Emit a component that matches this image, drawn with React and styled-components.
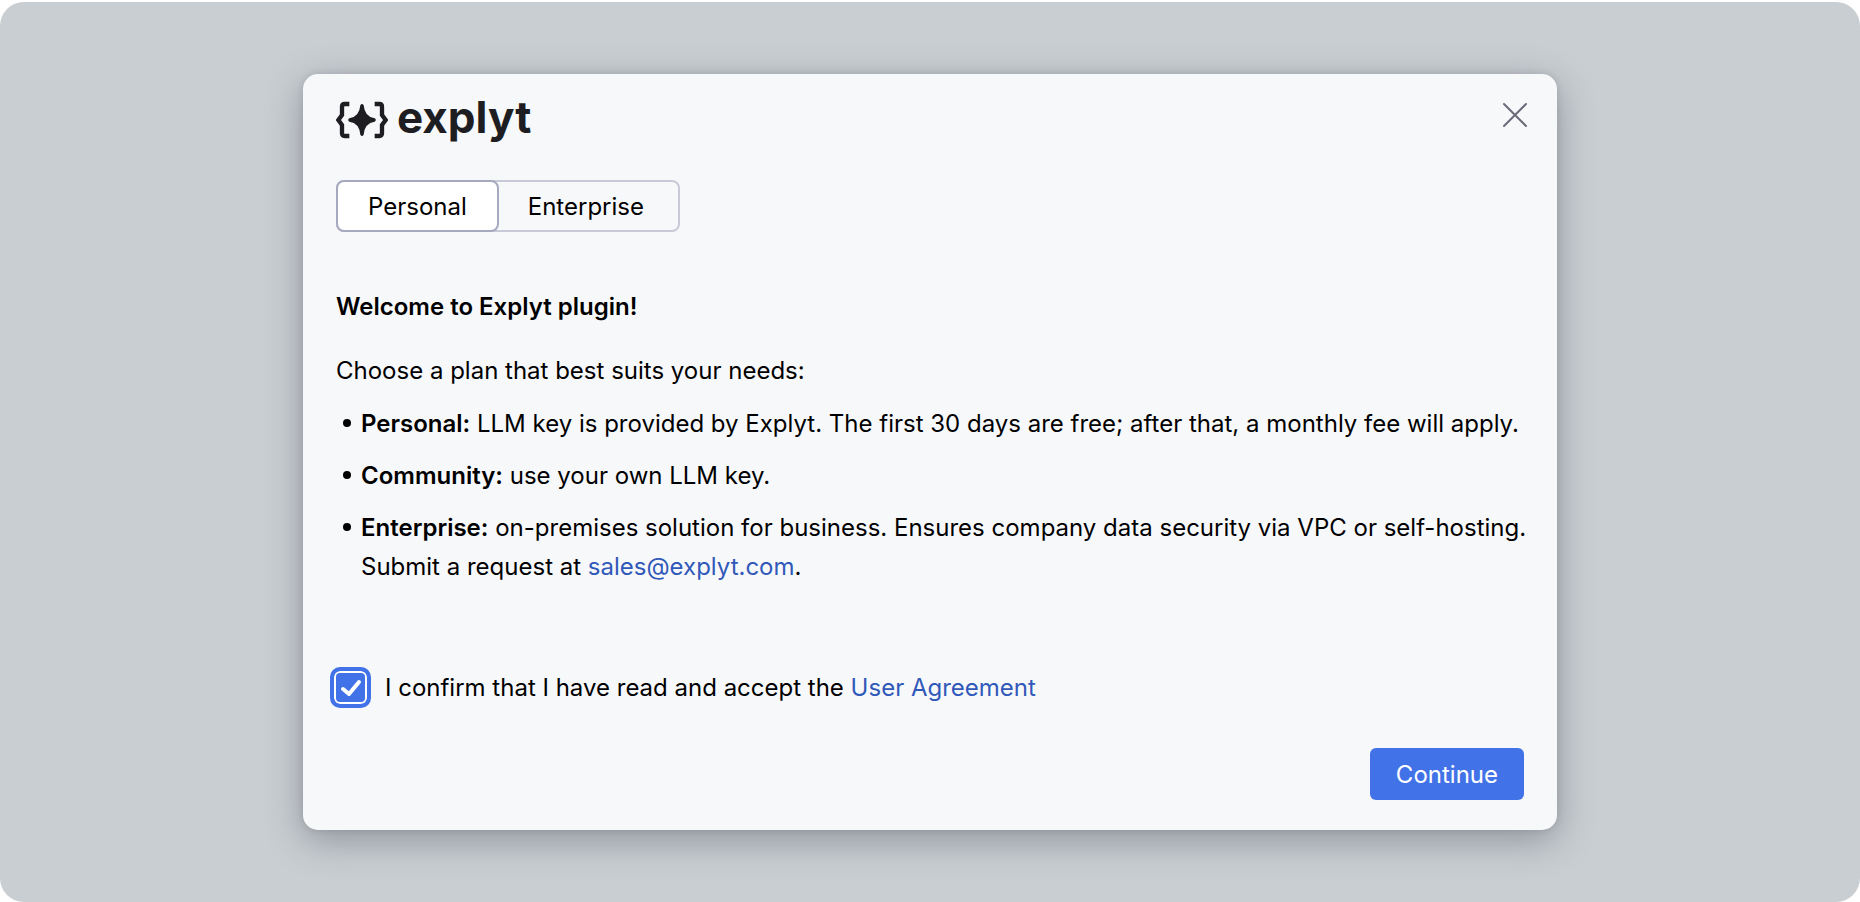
import React, { useState } from "react";
import styled, { createGlobalStyle } from "styled-components";

const GlobalStyle = createGlobalStyle`
  *, *::before, *::after { box-sizing: border-box; }
  body {
    margin: 0;
    background: #fff;
    color: #000;
    font-family: Inter, "Liberation Sans", sans-serif;
    font-size: 24px;
    line-height: 39px;
  }
  button, input { font: inherit; }
`;

const Page = styled.div`
  min-height: 100vh;
  padding-top: 2px;
  display: flex;
`;

const Backdrop = styled.main`
  flex: 1;
  display: flex;
  align-items: center;
  justify-content: center;
  padding: 24px;
  border-radius: 24px;
  background: #c9ced2;
`;

const Dialog = styled.section`
  width: 100%;
  max-width: 1254px;
  padding: 24px 28px 30px 33px;
  border-radius: 15px;
  background: #f7f8fa;
  box-shadow: 0 10px 36px rgba(60, 60, 75, 0.4), 0 0 6px rgba(60, 60, 75, 0.15);
`;

const Header = styled.header`
  display: flex;
  align-items: flex-start;
  justify-content: space-between;
  min-height: 48px;
`;

const Logo = styled.div`
  display: flex;
  align-items: center;
  gap: 9px;
  height: 44px;
  color: #1e1e22;
`;

const Wordmark = styled.span`
  padding-bottom: 6px;
  font-size: 44px;
  font-weight: 700;
  line-height: 38px;
`;

const CloseButton = styled.button`
  display: flex;
  padding: 4px 1px;
  border: 0;
  background: none;
  color: #6a6a78;
  cursor: pointer;
`;

const Tabs = styled.div`
  display: inline-flex;
  margin-top: 34px;
  border-radius: 8px;
  box-shadow: inset 0 0 0 2px #c9cad8;
`;

const Tab = styled.button`
  height: 52px;
  padding: ${(p) => (p.$active ? "0 30px" : "0 34px 0 27px")};
  border: 2px solid ${(p) => (p.$active ? "#a7a9bf" : "transparent")};
  border-radius: 8px;
  background: ${(p) => (p.$active ? "#fff" : "transparent")};
  color: #000;
  cursor: pointer;
`;

const Title = styled.h1`
  margin: 55px 0 25px;
  font-size: 24px;
  font-weight: 600;
`;

const Lead = styled.p`
  margin: 0 0 14px;
`;

const PlanList = styled.ul`
  display: flex;
  flex-direction: column;
  gap: 13px;
  margin: 0;
  padding: 0;
  list-style: none;
`;

const Plan = styled.li`
  display: flex;

  &::before {
    content: "";
    flex: none;
    width: 8px;
    height: 8px;
    margin: 15px 10px 0 7px;
    border-radius: 50%;
    background: #000;
  }
`;

const PlanName = styled.strong`
  font-weight: 600;
`;

const TextLink = styled.a`
  color: #3159b9;
  text-decoration: none;
`;

const Consent = styled.div`
  display: flex;
  align-items: center;
  gap: 14px;
  margin: 81px 0 40px -6px;
`;

const CheckFrame = styled.span`
  position: relative;
  display: flex;
  width: 41px;
  height: 41px;
`;

const Checkbox = styled.input`
  appearance: none;
  width: 41px;
  height: 41px;
  margin: 0;
  border: 4px solid #4272e8;
  border-radius: 10px;
  background: ${(p) => (p.checked ? "#4272e8" : "#fff")};
  box-shadow: inset 0 0 0 2px #fff;
  cursor: pointer;
`;

const CheckIcon = styled.svg`
  position: absolute;
  inset: 0;
  pointer-events: none;
`;

const Footer = styled.footer`
  display: flex;
  justify-content: flex-end;
  padding-right: 5px;
`;

const PrimaryButton = styled.button`
  height: 52px;
  padding: 0 26px;
  border: 0;
  border-radius: 6px;
  background: #4272e8;
  color: #fff;
  cursor: pointer;
`;

const BRACE = "M90 45 H76 Q68 45 68 53 V78 L57 93 L68 108 V133 Q68 141 76 141 H90";

function LogoMark() {
  return (
    <svg width="52" height="38" viewBox="50 36 156 114" aria-hidden="true">
      <g fill="none" stroke="currentColor" strokeWidth="13">
        <path d={BRACE} />
        <path d={BRACE} transform="matrix(-1 0 0 1 256 0)" />
      </g>
      <path
        fill="currentColor"
        d="M123 49 Q128 41 133 49 Q136 84 166 88 Q173 93 166 98 Q136 102 133 137 Q128 145 123 137 Q120 102 90 98 Q83 93 90 88 Q120 84 123 49Z"
      />
    </svg>
  );
}

export default function App() {
  const [plan, setPlan] = useState("Personal");
  const [accepted, setAccepted] = useState(true);

  return (
    <Page>
      <GlobalStyle />
      <Backdrop>
        <Dialog role="dialog" aria-labelledby="welcome">
          <Header>
            <Logo>
              <LogoMark />
              <Wordmark>explyt</Wordmark>
            </Logo>
            <CloseButton type="button" aria-label="Close">
              <svg width="26" height="26" viewBox="0 0 26 26" fill="none" stroke="currentColor" strokeWidth="2" strokeLinecap="round">
                <path d="M2 2 L24 24 M24 2 L2 24" />
              </svg>
            </CloseButton>
          </Header>

          <Tabs role="tablist">
            {["Personal", "Enterprise"].map((name) => (
              <Tab
                key={name}
                type="button"
                role="tab"
                aria-selected={plan === name}
                $active={plan === name}
                onClick={() => setPlan(name)}
              >
                {name}
              </Tab>
            ))}
          </Tabs>

          <Title id="welcome">Welcome to Explyt plugin!</Title>
          <Lead>Choose a plan that best suits your needs:</Lead>
          <PlanList>
            <Plan>
              <span>
                <PlanName>Personal:</PlanName> LLM key is provided by Explyt. The first 30 days are free; after that, a monthly fee will apply.
              </span>
            </Plan>
            <Plan>
              <span>
                <PlanName>Community:</PlanName> use your own LLM key.
              </span>
            </Plan>
            <Plan>
              <span>
                <PlanName>Enterprise:</PlanName> on-premises solution for business. Ensures company data security via VPC or self-hosting.
                <br />
                Submit a request at <TextLink href="mailto:sales@explyt.com">sales@explyt.com</TextLink>.
              </span>
            </Plan>
          </PlanList>

          <Consent>
            <CheckFrame>
              <Checkbox id="accept" type="checkbox" checked={accepted} onChange={(e) => setAccepted(e.target.checked)} />
              {accepted && (
                <CheckIcon viewBox="0 0 41 41" fill="none" stroke="#fff" strokeWidth="4" strokeLinecap="round" strokeLinejoin="round">
                  <path d="M13 22 L19 27 L29 15" />
                </CheckIcon>
              )}
            </CheckFrame>
            <label htmlFor="accept">
              I confirm that I have read and accept the <TextLink href="#agreement">User Agreement</TextLink>
            </label>
          </Consent>

          <Footer>
            <PrimaryButton type="button">Continue</PrimaryButton>
          </Footer>
        </Dialog>
      </Backdrop>
    </Page>
  );
}
